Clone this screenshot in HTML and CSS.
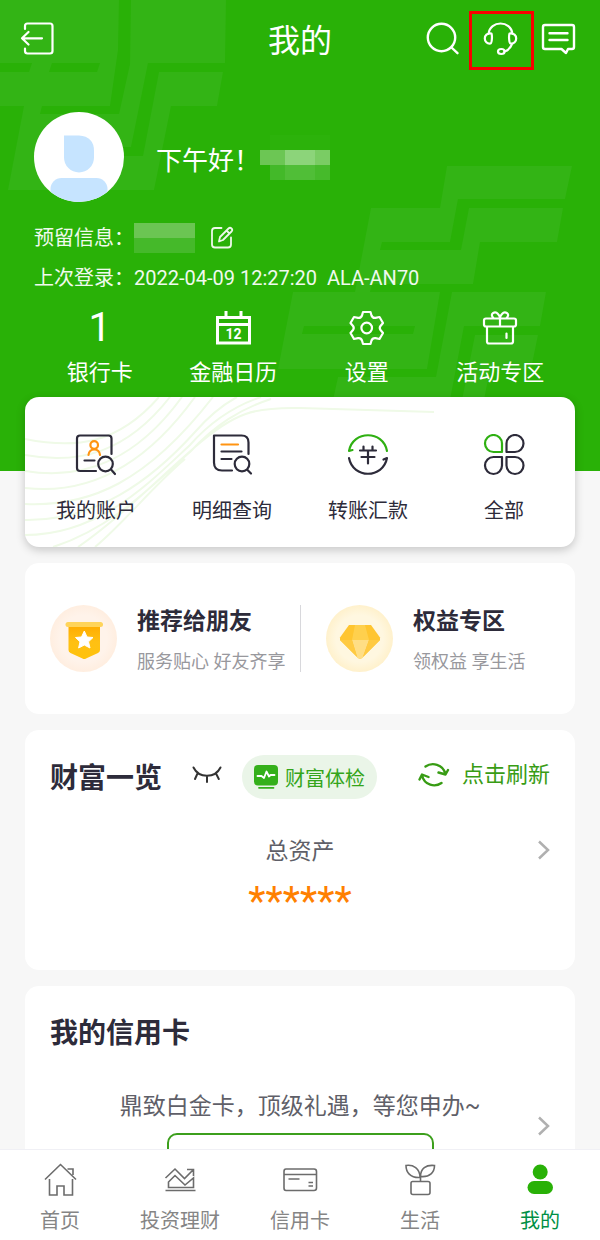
FILE: index.html
```html
<!DOCTYPE html>
<html lang="zh-CN">
<head>
<meta charset="utf-8">
<meta name="viewport" content="width=device-width, initial-scale=1">
<title>我的</title>
<link rel="stylesheet" href="styles.css">
</head>
<body>
<div class="app">
  <div class="scroll">
    <header class="hero">
      <svg class="hero-pattern" width="600" height="471" viewBox="0 0 600 471" aria-hidden="true">
        <g fill="#33b415">
          <path fill-rule="evenodd" d="M0 0H119L118 50 110 106H0ZM0 63V72H29L32 63ZM52 63 49 72H97L100 63Z"/>
          <path d="M131 0H226L225 63H148L131 147H100V156H143L159 72H223L217 106H171L154 190H8L24 106H42L40 114H119L130 64Z"/>
          <path d="M447 166H572L565 199H458L450 242H382L380 250H461L469 208H563L557 242H480L473 284H372L370 292H355L371 208H440Z"/>
          <path fill-rule="evenodd" d="M293 292H440L427 369H278ZM304 326 302 334H413L415 326Z"/>
          <path d="M452 292H546L540 326H464L450 400H333L338 377H436Z"/>
          <path d="M475 335H538L531 369H490L484 400H462Z"/>
        </g>
      </svg>

      <div class="topbar">
        <button class="icon-btn" type="button" aria-label="退出">
          <svg class="bleed" width="34" height="36" viewBox="24 22 34 36" fill="none" stroke="#fff" stroke-width="2.200" stroke-linecap="round" stroke-linejoin="round"><path d="M25 29V26Q25 23.500 27.500 23.500H50Q52.500 23.500 52.500 26V51Q52.500 53.500 50 53.500H27.500Q25 53.500 25 51V48.500M42 38.300H22.500M28.500 32 22 38.300 28.500 44.500"/></svg>
        </button>
        <h1 class="title">我的</h1>
        <div class="tools">
          <button class="icon-btn" type="button" aria-label="搜索">
            <svg class="bleed" width="34" height="34" viewBox="426 23 34 34" fill="none" stroke="#fff" stroke-width="2.400" stroke-linecap="round"><circle cx="440.500" cy="37.500" r="13.700"/><path d="M450.500 47.500 456.500 53.200"/></svg>
          </button>
          <button class="icon-btn service" type="button" aria-label="客服">
            <svg class="bleed" width="34" height="34" viewBox="485 23 34 34" fill="none" stroke="#fff" stroke-width="2.200" stroke-linecap="round" stroke-linejoin="round"><path d="M488.500 34C490 20 511 20 512.500 34M491.500 33.500C487 33 484.800 35.500 484.800 38.500S487 44 490.500 43.500C492 43 492.300 36 491.500 33.500ZM509.500 33.500C514 33 516.200 35.500 516.200 38.500S514 44 510.500 43.500C509 43 508.700 36 509.500 33.500ZM512 44C510.500 48 508 50.500 504.500 51.500"/><ellipse cx="501.300" cy="51.500" rx="3.300" ry="2.500"/></svg>
          </button>
          <button class="icon-btn" type="button" aria-label="消息">
            <svg class="bleed" width="34" height="34" viewBox="542 23 34 34" fill="none" stroke="#fff" stroke-width="2.400" stroke-linecap="round" stroke-linejoin="round"><path d="M545 25H572Q574 25 574 27V47Q574 49 572 49H568L566 53 561.500 49H545Q543 49 543 47V27Q543 25 545 25ZM549.500 33.300H567.500M549.500 40H567.500"/></svg>
          </button>
        </div>
      </div>

      <div class="profile">
        <svg class="avatar" width="90" height="90" viewBox="0 0 90 90" role="img" aria-label="头像">
          <defs><clipPath id="face"><circle cx="45" cy="45" r="45"/></clipPath></defs>
          <circle cx="45" cy="45" r="45" fill="#fff"/>
          <g fill="#c6e4ff" clip-path="url(#face)"><path d="M30 23.500H45Q60 24.500 60 39V45.500A15 15 0 0 1 30 45.500Z"/><rect x="16.500" y="66" width="57" height="34" rx="11"/></g>
        </svg>
        <p class="greeting">下午好！</p>
        <svg width="70" height="45" viewBox="260 135 70 45" aria-hidden="true" shape-rendering="crispEdges">
          <path fill="#2cb20b" d="M270 135H330V150H270Z"/>
          <path fill="#6cc654" d="M260 150H285V165H260Z"/><path fill="#8cd47a" d="M285 150H315V165H285Z"/><path fill="#7acc64" d="M315 150H330V165H315Z"/>
          <path fill="#43b929" d="M270 165H285V180H270Z"/><path fill="#50be37" d="M285 165H315V180H285Z"/><path fill="#46ba2b" d="M315 165H330V180H315Z"/>
        </svg>
      </div>

      <div class="info">
        <p class="info-row">预留信息：<svg class="mask" width="61" height="30" viewBox="0 0 61 30" aria-hidden="true"><path fill="#6bc553" d="M0 0H61V15H0Z"/><path fill="#45b92a" d="M0 15H61V30H0Z"/></svg>
          <button class="icon-btn" type="button" aria-label="编辑预留信息">
            <svg width="24" height="24" viewBox="210 225 24 24" fill="none" stroke="#eef9eb" stroke-width="1.800" stroke-linecap="round" stroke-linejoin="round"><path d="M221.500 227H215Q212 227 212 230V243.500Q212 246.500 215 246.500H228Q231 246.500 231 243.500V236.500M219 240.500 220 236 228.500 227.500Q230 226 231.500 227.500T231.500 230.500L223 239ZM226.500 229.500 229.500 232.500"/></svg>
          </button>
        </p>
        <p class="info-row">上次登录：<span>2022-04-09 12:27:20&nbsp; ALA-AN70</span></p>
      </div>

      <nav class="quick" aria-label="快捷入口">
        <a class="quick-item" href="#cards"><span class="quick-figure">1</span><span>银行卡</span></a>
        <a class="quick-item" href="#calendar">
          <span class="quick-figure"><svg width="36" height="36" viewBox="215 309 36 36" aria-hidden="true"><path fill="none" stroke="#fff" stroke-width="3" d="M217.500 316.500H249.500V342H217.500ZM217.500 323.500H249.500M226 317V310M241 317V310"/><text class="cal-day" x="233.500" y="337.500" text-anchor="middle" fill="#fff">12</text></svg></span>
          <span>金融日历</span></a>
        <a class="quick-item" href="#settings">
          <span class="quick-figure"><svg width="36" height="36" viewBox="349 309 36 36" fill="none" stroke="#fff" stroke-width="2.200" stroke-linejoin="round" aria-hidden="true"><circle cx="366.700" cy="327" r="5.300"/><path d="M363 311H370.500L371.500 314.500Q372.500 317.200 375.500 316.800L379.500 316 383 322 380.500 325Q379 327 380.500 329L383 332 379.500 338 375.500 337.200Q372.500 336.800 371.500 339.500L370.500 343H363L362 339.500Q361 336.800 358 337.200L354 338 350.500 332 353 329Q354.500 327 353 325L350.500 322 354 316 358 316.800Q361 317.200 362 314.500Z"/></svg></span>
          <span>设置</span></a>
        <a class="quick-item" href="#events">
          <span class="quick-figure"><svg width="36" height="36" viewBox="482 309 36 36" fill="none" stroke="#fff" stroke-width="2.200" stroke-linecap="round" stroke-linejoin="round" aria-hidden="true"><path d="M486 317.500H514Q516 317.500 516 319.500V323.500Q516 325.500 514 325.500H486Q484 325.500 484 323.500V319.500Q484 317.500 486 317.500ZM487 326V340.500Q487 342.500 489 342.500H511Q513 342.500 513 340.500V326M500 317V325M506.500 332.500V337M493.500 317C489 313 495 309.500 498 313Q500 315 500 317Q500 315 502 313C505 309.500 511 313 506.500 317"/></svg></span>
          <span>活动专区</span></a>
      </nav>
    </header>

    <main class="cards">
      <section class="card services" aria-label="常用功能">
        <svg class="waves" width="410" height="150" viewBox="0 0 410 150" fill="none" stroke="#effae7" stroke-width="2" aria-hidden="true"><path d="M0 42C50 52 92 48 134 0M0 58C55 68 102 55 145 0M0 74C60 84 112 62 157 0M0 91C60 98 118 72 170 0M0 107C65 110 122 85 188 0M0 123C70 124 125 85 170 35Q190 12 212 0M0 138C75 138 125 85 165 48Q195 14 236 0M28 150C90 130 130 85 165 55 190 28 215 12 246 2M53 150C90 125 130 85 170 50S230 10 275 11Q340 13 409 15M70 150C100 125 125 92 160 62"/></svg>
        <a class="service-item" href="#account">
          <svg width="42" height="42" viewBox="75 434 42 42" fill="none" stroke="#2d2b3a" stroke-width="2.200" stroke-linecap="round" stroke-linejoin="round" aria-hidden="true"><path d="M96 471H80Q77 471 77 468V438.500Q77 435.500 80 435.500H108.500Q111.500 435.500 111.500 438.500V454M84.500 460.500H94.500M111.500 470 115 474"/><circle cx="105.500" cy="464" r="7.300"/><g stroke="#ff9412"><circle cx="94.200" cy="445" r="3.800"/><path d="M88.500 455C89 447.500 99.500 447.500 100 455"/></g></svg>
          <span>我的账户</span></a>
        <a class="service-item" href="#detail">
          <svg width="42" height="42" viewBox="211 434 42 42" fill="none" stroke="#2d2b3a" stroke-width="2.200" stroke-linecap="round" stroke-linejoin="round" aria-hidden="true"><path d="M232 470.500H222Q214 470.500 214 462.500V435.500H241.500Q248.500 435.500 248.500 442.500V454M221.500 451.500H241.500M221.500 459H231.500M247.500 470 251 473.500"/><circle cx="242" cy="464" r="7.300"/><path stroke="#ff9412" d="M221.500 444.500H238"/></svg>
          <span>明细查询</span></a>
        <a class="service-item" href="#transfer">
          <svg width="42" height="42" viewBox="347 434 42 42" fill="none" stroke="#2d2b3a" stroke-width="2.200" stroke-linecap="round" stroke-linejoin="round" aria-hidden="true"><path stroke="#2fb012" d="M387 451C383 430 353 430 349 451L352.500 450"/><path d="M349 458C353 479 383 479 387 458L383.500 459.500M360 450.500H376M361.500 457H374.500M368 451V463.500M363.500 446.500V450M372.500 446.500V450"/></svg>
          <span>转账汇款</span></a>
        <a class="service-item" href="#all">
          <svg width="42" height="42" viewBox="483 434 42 42" fill="none" stroke="#2d2b3a" stroke-width="2.200" stroke-linejoin="round" aria-hidden="true"><path stroke="#2fb012" d="M502 452V443.500A8.500 8.500 0 1 0 493.500 452Z"/><path d="M506.500 452V443.500A8.500 8.500 0 1 1 515 452ZM502 457V465.500A8.500 8.500 0 1 1 493.500 457ZM506.500 457V465.500A8.500 8.500 0 1 0 515 457Z"/></svg>
          <span>全部</span></a>
      </section>

      <section class="card promos" aria-label="推荐">
        <a class="promo" href="#invite">
          <svg width="67" height="67" viewBox="0 0 67 67" aria-hidden="true">
            <defs><radialGradient id="peach"><stop offset=".7" stop-color="#fff3ea"/><stop offset="1" stop-color="#ffeee0"/></radialGradient><linearGradient id="flag" x2="0" y2="1"><stop stop-color="#ffab00"/><stop offset=".5" stop-color="#ffc013"/><stop offset="1" stop-color="#ffc20c"/></linearGradient></defs>
            <circle cx="33.500" cy="33.500" r="33.500" fill="url(#peach)"/>
            <path fill="url(#flag)" d="M18.500 20H50V45Q50 47 48 48L36 53.500Q34.300 54.500 32.500 53.500L20.500 48Q18.500 47 18.500 45Z"/>
            <rect x="15.500" y="17" width="37.500" height="5" rx="2.500" fill="#ffd45a"/>
            <path fill="#fff" stroke="#fff" stroke-linejoin="round" d="M34.300 26 37 32 43 32.500 38.500 36.800 40 43 34.300 40 28.600 43 30 36.800 25.500 32.500 31.500 32Z"/>
          </svg>
          <span class="promo-text"><strong class="promo-title">推荐给朋友</strong><span class="promo-sub">服务贴心 好友齐享</span></span>
        </a>
        <a class="promo" href="#benefits">
          <svg width="67" height="67" viewBox="0 0 67 67" aria-hidden="true">
            <defs><radialGradient id="cream"><stop offset=".7" stop-color="#fff7e0"/><stop offset="1" stop-color="#fff1cc"/></radialGradient></defs>
            <circle cx="33.500" cy="33.500" r="33.500" fill="url(#cream)"/>
            <path fill="#ffc52f" d="M23 20H45L54 32.500V35L36 53Q34 54.500 32 53L14 35V32.500Z"/>
            <path fill="#ffd04d" d="M29 20H39L43 35H26Z"/><path fill="#ffde85" d="M26 35H43L36.500 53Q34 54.500 31.500 53Z"/><path fill="#ffca42" d="M14 35H26L31 52ZM54 35H43L37 52Z"/>
          </svg>
          <span class="promo-text"><strong class="promo-title">权益专区</strong><span class="promo-sub">领权益 享生活</span></span>
        </a>
      </section>

      <section class="card wealth">
        <div class="wealth-head">
          <h2 class="heading">财富一览</h2>
          <button class="icon-btn eye" type="button" aria-label="显示金额">
            <svg width="30" height="18" viewBox="192 767 30 18" fill="none" stroke="#333" stroke-width="2" stroke-linecap="round" aria-hidden="true"><path d="M193.500 768.500C199 779.500 215 779.500 220.500 768.500M197.500 774.500 195 780M207 777V783M216 774.500 218.800 780"/></svg>
          </button>
          <button class="pill" type="button">
            <svg width="24" height="24" viewBox="255 765 24 24" fill="none" stroke-linecap="round" stroke-linejoin="round" aria-hidden="true"><rect x="255" y="765" width="24" height="20.500" rx="4" fill="#34b01a"/><path stroke="#fff" stroke-width="1.800" d="M258.500 776H262.500L265 778 267.500 771.500 270 776.500 271.500 775H275.500"/><path stroke="#34b01a" stroke-width="1.800" d="M260 787.800H274.500"/></svg>
            财富体检</button>
          <button class="refresh" type="button">
            <svg width="32" height="26" viewBox="420 761 32 26" fill="none" stroke="#389c14" stroke-width="2.400" stroke-linecap="round" stroke-linejoin="round" aria-hidden="true"><path d="M427.500 765.500C434 761 445 763 447.500 773M440.500 771.500 447.500 773.500 450 769M443.500 782C437 786.500 426.500 784.500 424 774.500M421.500 778.500 424 773.500 430.500 776"/></svg>
            点击刷新</button>
        </div>
        <a class="row assets" href="#assets">
          <span class="row-text">总资产</span>
          <svg class="chevron" width="12" height="20" viewBox="0 0 12 20" fill="none" stroke="#b0b0b0" stroke-width="2.500" aria-hidden="true"><path d="M1 1.500 10 10 1 18.500"/></svg>
        </a>
        <p class="stars">******</p>
      </section>

      <section class="card credit">
        <h2 class="heading">我的信用卡</h2>
        <div class="row offer">
          <span class="row-text">鼎致白金卡，顶级礼遇，等您申办~</span>
          <svg class="chevron offer-chevron" width="12" height="20" viewBox="0 0 12 20" fill="none" stroke="#b0b0b0" stroke-width="2.500" aria-hidden="true"><path d="M1 1.500 10 10 1 18.500"/></svg>
          <button class="apply" type="button" aria-label="申办"></button>
        </div>
      </section>
    </main>
  </div>

  <nav class="tabs" aria-label="主导航">
    <a class="tab" href="#home"><svg width="36" height="36" viewBox="42 1162 36 36" aria-hidden="true"><path d="M45 1179.500 60.500 1164.500 76 1179.500M49.500 1179V1195H57V1186H64V1195H72.500V1179M67.500 1169H73V1175"/></svg><span>首页</span></a>
    <a class="tab" href="#invest"><svg width="36" height="36" viewBox="162 1162 36 36" aria-hidden="true"><path d="M165.500 1178 175 1169 184.500 1178.500 193 1170M187 1169.500H193.500V1176M168.500 1187.500V1182L175 1175.500 185 1185 193.500 1178V1187.500ZM165.500 1190.500H195.500"/></svg><span>投资理财</span></a>
    <a class="tab" href="#credit"><svg width="36" height="36" viewBox="282 1162 36 36" aria-hidden="true"><path d="M286 1169H314Q316.500 1169 316.500 1171.500V1188Q316.500 1190.500 314 1190.500H286Q284 1190.500 284 1188V1171.500Q284 1169 286 1169ZM284 1174.500H316.500M288.500 1179H299.500M308.500 1182.500H313M308.500 1186H313"/></svg><span>信用卡</span></a>
    <a class="tab" href="#life"><svg width="36" height="36" viewBox="402 1162 36 36" aria-hidden="true"><path d="M412.500 1181.500H428Q430 1181.500 430 1183.500V1192.500Q430 1194.500 428 1194.500H413Q411 1194.500 411 1192.500V1183.500Q411 1181.500 412.500 1181.500ZM420.500 1181V1176M420 1177.500C410 1178 406 1172 406 1165.500 413 1164.500 420 1168 420 1177.500ZM420.500 1176.500C420.500 1168.500 426 1164.500 434.500 1165.500 434.500 1172 430 1177.500 420.500 1176.500Z"/></svg><span>生活</span></a>
    <a class="tab active" href="#me" aria-current="page"><svg width="36" height="36" viewBox="522 1162 36 36" aria-hidden="true"><circle cx="540.200" cy="1172" r="7.500"/><rect x="527.500" y="1181" width="25.500" height="13" rx="6.500"/></svg><span>我的</span></a>
  </nav>
</div>
</body>
</html>
```

FILE: styles.css
```css
* {
  box-sizing: border-box;
}

body,
h1,
h2,
p {
  margin: 0;
}

body {
  font-family: Roboto, "Noto Sans CJK SC", sans-serif;
  font-size: 20px;
  color: #2d2b3a;
  background: #f7f7f7;
}

a {
  color: inherit;
  text-decoration: none;
}

button {
  padding: 0;
  border: 0;
  background: none;
  color: inherit;
  font: inherit;
  cursor: pointer;
}

svg {
  display: block;
  flex: none;
}

.app {
  display: flex;
  flex-direction: column;
  height: 100vh;
}

.scroll {
  flex: 1;
  min-height: 0;
  overflow-y: auto;
  scrollbar-width: none;
}

/* Green header */
.hero {
  position: relative;
  padding-bottom: 82px;
  background: #29b107;
  color: #fff;
}

.hero-pattern {
  position: absolute;
  top: 0;
  left: 0;
}

.topbar,
.profile,
.info,
.quick {
  position: relative;
}

.topbar {
  display: grid;
  grid-template-columns: 1fr auto 1fr;
  align-items: center;
  height: 80px;
  padding: 0 24px;
}

.icon-btn {
  display: flex;
  align-items: center;
  justify-content: center;
  justify-self: start;
}

.bleed {
  overflow: visible;
}

.title {
  padding-top: 2px;
  font-size: 32px;
  font-weight: 400;
  line-height: 40px;
}

.tools {
  display: flex;
  align-items: center;
  justify-content: flex-end;
  gap: 8px;
}

.service {
  width: 65px;
  height: 59px;
  border: 3px solid #f80000;
}

.profile {
  display: flex;
  align-items: center;
  padding: 32px 34px 0;
}

.greeting {
  margin-left: 32px;
  padding-top: 8px;
  font-size: 26px;
  line-height: 40px;
}

.info {
  padding: 16px 34px 0;
  color: #f0faee;
}

.info-row {
  display: flex;
  align-items: center;
  line-height: 40px;
}

.mask {
  margin-right: 15px;
}

.quick {
  display: grid;
  grid-template-columns: repeat(4, 1fr);
  padding: 10px 33px 0;
}

.quick-item {
  display: flex;
  flex-direction: column;
  align-items: center;
  gap: 9px;
  font-size: 22px;
  line-height: 32px;
}

.quick-figure {
  display: flex;
  align-items: center;
  height: 40px;
  font-size: 40px;
}

.cal-day {
  font-size: 14px;
  font-weight: 700;
}

/* Cards */
.cards {
  position: relative;
  display: flex;
  flex-direction: column;
  gap: 16px;
  margin-top: -74px;
  padding: 0 25px 16px;
}

.card {
  border-radius: 14px;
  background: #fff;
}

.services {
  position: relative;
  display: grid;
  grid-template-columns: repeat(4, 1fr);
  padding: 37px 3px 21px;
  box-shadow: 0 3px 10px rgba(0, 0, 0, 0.2);
}

.waves {
  position: absolute;
  top: 0;
  left: 0;
}

.service-item {
  position: relative;
  display: flex;
  flex-direction: column;
  align-items: center;
  gap: 20px;
  line-height: 30px;
}

.promos {
  display: grid;
  grid-template-columns: 1fr 1fr;
  padding: 42px 0;
}

.promo {
  display: flex;
  align-items: center;
  gap: 20px;
  height: 67px;
  padding-left: 25px;
  white-space: nowrap;
}

.promo + .promo {
  border-left: 1px solid #d8d8dc;
}

.promo-text {
  display: flex;
  flex-direction: column;
  gap: 12px;
  padding-top: 2px;
}

.promo-title {
  font-size: 23px;
  font-weight: 700;
  line-height: 32px;
}

.promo-sub {
  color: #98989d;
  font-size: 18px;
  line-height: 24px;
}

.heading {
  font-size: 28px;
  font-weight: 700;
  line-height: 40px;
}

.wealth {
  padding: 25px 25px 48px;
}

.wealth-head {
  display: flex;
  align-items: flex-start;
}

.wealth-head .heading {
  align-self: flex-end;
}

.eye {
  height: 40px;
  margin: 0 20px 0 30px;
}

.pill {
  display: flex;
  align-items: center;
  gap: 7px;
  height: 44px;
  padding: 0 12px;
  border-radius: 22px;
  background: #eaf5e8;
  color: #34a51a;
}

.refresh {
  display: flex;
  align-items: center;
  gap: 12px;
  margin-left: auto;
  color: #389c14;
  font-size: 22px;
  line-height: 40px;
}

.row {
  display: grid;
  grid-template-columns: 1fr auto 1fr;
  color: #5f5f68;
  font-size: 23px;
  line-height: 34px;
}

.row-text {
  grid-column: 2;
}

.chevron {
  align-self: start;
  justify-self: end;
  margin-top: 5px;
}

.assets {
  margin-top: 36px;
}

.stars {
  margin-top: 13px;
  color: #ff8000;
  font-size: 40px;
  line-height: 40px;
  text-align: center;
}

.credit {
  padding: 28px 25px 25px;
}

.offer {
  row-gap: 9px;
  margin-top: 36px;
}

.offer-chevron {
  grid-row: 1 / 3;
  grid-column: 3;
  margin-top: 26px;
}

.apply {
  grid-row: 2;
  grid-column: 2;
  justify-self: center;
  width: 267px;
  height: 56px;
  border: 2px solid #3c9f1c;
  border-radius: 10px;
}

/* Bottom tab bar */
.tabs {
  display: grid;
  grid-template-columns: repeat(5, 1fr);
  padding: 12px 0 4px;
  border-top: 1px solid #f0f0f5;
  background: #fff;
}

.tab {
  display: flex;
  flex-direction: column;
  align-items: center;
  gap: 8px;
  color: #858585;
  line-height: 30px;
}

.tab svg {
  fill: none;
  stroke: #6c6c6c;
  stroke-width: 1.6px;
}

.tab.active {
  color: #008f45;
}

.tab.active svg {
  fill: #29b107;
  stroke: none;
}
```
